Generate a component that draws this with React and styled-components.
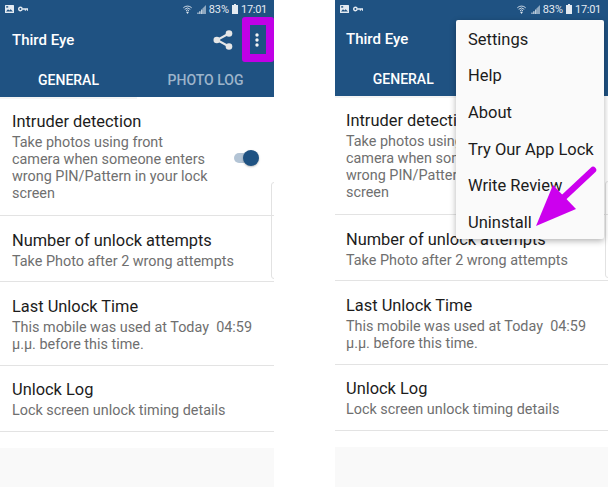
import React from "react";
import styled, { createGlobalStyle } from "styled-components";

const Global = createGlobalStyle`
  html, body { margin: 0; padding: 0; background: #fff; }
  #root { width: 608px; height: 487px; overflow: hidden; }
`;

const Page = styled.div`
  position: relative;
  width: 608px;
  height: 487px;
  display: flex;
  justify-content: space-between;
  overflow: hidden;
  font-family: Roboto, "Liberation Sans", sans-serif;
  background: #fff;
`;

const Phone = styled.section`
  position: relative;
  width: ${p => p.$w}px;
  height: 487px;
  display: flex;
  flex-direction: column;
  background: #fff;
  overflow: hidden;
`;

const Header = styled.header`
  background: #1f5282;
  height: ${p => p.$h}px;
  display: flex;
  flex-direction: column;
  flex: none;
`;

const StatusBar = styled.div`
  height: 18px;
  flex: none;
  padding: 0 7px 0 5px;
  display: flex;
  align-items: center;
  justify-content: space-between;
  color: #e4ebf2;
  font-size: 11px;
`;

const StatusGroup = styled.div`
  display: flex;
  align-items: center;
  gap: 3px;
`;

const Time = styled.span`
  letter-spacing: -0.3px;
  margin-left: 0;
`;

const Toolbar = styled.div`
  height: ${p => p.$h}px;
  flex: none;
  padding: 0 0 0 ${p => p.$pad}px;
  display: flex;
  align-items: center;
  justify-content: space-between;
`;

const Title = styled.h1`
  margin: 0;
  color: #fff;
  font-size: 15px;
  font-weight: 500;
`;

const ToolIcons = styled.div`
  display: flex;
  align-items: center;
  gap: 22px;
  padding-right: 15px;
`;

const Tabs = styled.nav`
  flex: 1;
  display: flex;
`;

const Tab = styled.div`
  flex: 1;
  display: flex;
  align-items: center;
  justify-content: center;
  padding-top: 1px;
  font-size: 14px;
  font-weight: 500;
  color: ${p => (p.$active ? "#fff" : "#9db4ca")};
`;

const Indicator = styled.div`
  height: 2px;
  width: 137px;
  background: #f4f4f4;
  flex: none;
`;

const List = styled.div`
  flex: none;
  display: flex;
  flex-direction: column;
`;

const Row = styled.div`
  height: ${p => p.$h}px;
  box-sizing: border-box;
  padding: ${p => p.$top}px 15px 0 ${p => p.$pad}px;
  display: flex;
  align-items: center;
  justify-content: space-between;
  border-bottom: 1px solid #e3e3e3;
`;

const RowText = styled.div`
  display: flex;
  flex-direction: column;
`;

const RowTitle = styled.div`
  font-size: 16.4px;
  line-height: 20px;
  color: #1c1c1c;
`;

const RowSub = styled.div`
  margin-top: 2px;
  font-size: 14.4px;
  line-height: 17px;
  color: #6f6f6f;
  white-space: pre-wrap;
`;

const ToggleWrap = styled.div`
  position: relative;
  width: 25px;
  height: 16px;
  margin-top: 1px;
  flex: none;
`;

const ToggleTrack = styled.div`
  position: absolute;
  left: 0;
  top: 3px;
  width: 22px;
  height: 10px;
  border-radius: 5px;
  background: #b3c4d5;
`;

const ToggleKnob = styled.div`
  position: absolute;
  right: 0;
  top: 0;
  width: 16px;
  height: 16px;
  border-radius: 50%;
  background: #1f5282;
  box-shadow: 0 1px 2px rgba(0, 0, 0, 0.25);
`;

const Footer = styled.div`
  margin-top: 16px;
  flex: 1;
  background: #f9f9f9;
`;

const EdgeTab = styled.div`
  position: absolute;
  right: -6px;
  top: ${p => p.$top}px;
  width: 9px;
  height: 97px;
  box-sizing: border-box;
  border: 1px solid #e2e2e2;
  border-radius: 3px;
`;

const Highlight = styled.div`
  position: absolute;
  left: 242px;
  top: 17px;
  width: 32px;
  height: 45px;
  box-sizing: border-box;
  border: 8px solid #c000e6;
  border-radius: 3px;
`;

const Menu = styled.ul`
  position: absolute;
  left: 121px;
  top: 20px;
  width: 148px;
  height: 219px;
  box-sizing: border-box;
  margin: 0;
  padding: 1px 0 0;
  list-style: none;
  background: #fafafa;
  border-radius: 2px;
  box-shadow: 0 2px 6px rgba(0, 0, 0, 0.3);
  display: flex;
  flex-direction: column;
`;

const MenuItem = styled.li`
  height: 36.6px;
  flex: none;
  padding-left: 12px;
  display: flex;
  align-items: center;
  font-size: 16.5px;
  color: #1c1c1c;
`;

const ArrowSvg = styled.svg`
  position: absolute;
  left: 530px;
  top: 160px;
`;

const StatusLeft = () => (
  <StatusGroup>
    <svg width="9" height="8" viewBox="0 0 9 8">
      <rect width="9" height="8" rx="0.5" fill="#e4ebf2" />
      <path d="M1 6.5l2-2.3 1.4 1.3 1.2-1.2L8 6.5z" fill="#1f5282" />
      <rect x="1.2" y="1.2" width="2" height="1.4" fill="#1f5282" />
    </svg>
    <svg width="10" height="6" viewBox="0 0 10 6" style={{ marginLeft: 1 }}>
      <circle cx="2.4" cy="3" r="1.7" fill="none" stroke="#e4ebf2" strokeWidth="1.4" />
      <path d="M4.2 2.2H10v2.6H8.9V3.8H7.9v1H6.8v-1H4.2z" fill="#e4ebf2" />
    </svg>
  </StatusGroup>
);

const StatusRight = () => (
  <StatusGroup>
    <svg width="9" height="9" viewBox="0 0 9 9">
      <path d="M0.3 2.8a6 6 0 0 1 8.4 0M1.7 4.3a4 4 0 0 1 5.6 0M3 5.7a2 2 0 0 1 3 0" fill="none" stroke="#dfe7ef" strokeWidth="0.9" />
      <path d="M3 6.8h3L4.5 9z" fill="#dfe7ef" />
    </svg>
    <svg width="9" height="9" viewBox="0 0 9 9" style={{ marginLeft: 2 }}>
      <path d="M9 0v9H5.5V3.4z" fill="#8ea8c0" />
      <path d="M0.5 7.5h1V9h-1zM2.3 6.2h1.2V9H2.3zM4.2 4.6h1.2V9H4.2z" fill="#e4ebf2" />
    </svg>
    <span>83%</span>
    <svg width="6" height="10" viewBox="0 0 6 10">
      <path d="M2 0h2v1h2v9H0V1h2z" fill="#e4ebf2" />
    </svg>
    <Time>17:01</Time>
  </StatusGroup>
);

const ShareIcon = () => (
  <svg width="20" height="22" viewBox="0 0 20 22">
    <path d="M16 4.5L4 11l12 6.5" fill="none" stroke="#e6e6e6" strokeWidth="2" />
    <circle cx="16" cy="4.5" r="3.3" fill="#e6e6e6" />
    <circle cx="3.8" cy="11" r="3.3" fill="#e6e6e6" />
    <circle cx="16" cy="17.5" r="3.3" fill="#e6e6e6" />
  </svg>
);

const DotsIcon = () => (
  <svg width="4" height="14" viewBox="0 0 4 14">
    <circle cx="2" cy="2" r="1.7" fill="#f4f4f4" />
    <circle cx="2" cy="7" r="1.7" fill="#f4f4f4" />
    <circle cx="2" cy="12" r="1.7" fill="#f4f4f4" />
  </svg>
);

const rows = [
  { h: 117, top: 0, title: "Intruder detection", sub: "Take photos using front\ncamera when someone enters\nwrong PIN/Pattern in your lock\nscreen", toggle: true },
  { h: 66, top: 3, title: "Number of unlock attempts", sub: "Take Photo after 2 wrong attempts" },
  { h: 84, top: 2, title: "Last Unlock Time", sub: "This mobile was used at Today  04:59\nμ.μ. before this time." },
  { h: 66, top: 2, title: "Unlock Log", sub: "Lock screen unlock timing details" },
];

const Screen = ({ width, headerH, toolbarH, pad, edgeTop, children, showActions }) => (
  <Phone $w={width}>
    <Header $h={headerH}>
      <StatusBar>
        <StatusLeft />
        <StatusRight />
      </StatusBar>
      <Toolbar $h={toolbarH} $pad={pad}>
        <Title>Third Eye</Title>
        {showActions && (
          <ToolIcons>
            <ShareIcon />
            <DotsIcon />
          </ToolIcons>
        )}
      </Toolbar>
      <Tabs>
        <Tab $active>GENERAL</Tab>
        <Tab>PHOTO LOG</Tab>
      </Tabs>
    </Header>
    <Indicator />
    <List>
      {rows.map(r => (
        <Row key={r.title} $h={r.h} $top={r.top} $pad={pad}>
          <RowText>
            <RowTitle>{r.title}</RowTitle>
            <RowSub>{r.sub}</RowSub>
          </RowText>
          {r.toggle && (
            <ToggleWrap>
              <ToggleTrack />
              <ToggleKnob />
            </ToggleWrap>
          )}
        </Row>
      ))}
    </List>
    <Footer />
    <EdgeTab $top={edgeTop} />
    {children}
  </Phone>
);

export default function App() {
  return (
    <Page>
      <Global />
      <Screen width={274} headerH={97} toolbarH={43} pad={12} edgeTop={182} showActions>
        <Highlight />
      </Screen>
      <Screen width={273} headerH={96} toolbarH={42} pad={11} edgeTop={181}>
        <Menu>
          {["Settings", "Help", "About", "Try Our App Lock", "Write Review", "Uninstall"].map(m => (
            <MenuItem key={m}>{m}</MenuItem>
          ))}
        </Menu>
      </Screen>
      <ArrowSvg width="70" height="72" viewBox="530 160 70 72">
        <path d="M593 170L562 199" stroke="#cc00ee" strokeWidth="6.5" strokeLinecap="round" fill="none" />
        <path d="M553 185L576 209L536 226z" fill="#cc00ee" />
      </ArrowSvg>
    </Page>
  );
}
